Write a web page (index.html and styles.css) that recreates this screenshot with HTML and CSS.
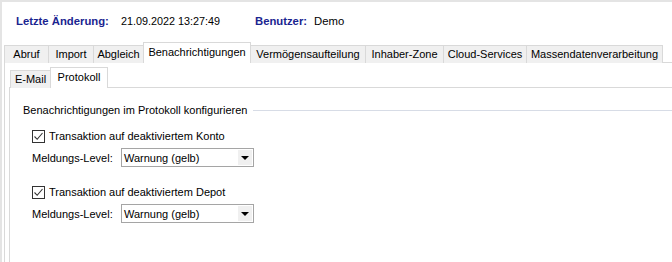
FILE: index.html
```html
<!DOCTYPE html>
<html lang="de">
<head>
<meta charset="UTF-8">
<title>Benachrichtigungen</title>
<link rel="stylesheet" href="styles.css">
</head>
<body>
<div class="window">
    <div class="header">
        <span class="label">Letzte Änderung:</span>
        <span class="value date">21.09.2022 13:27:49</span>
        <span class="label user">Benutzer:</span>
        <span class="value name">Demo</span>
    </div>

    <div class="tabs main">
        <div class="tab">Abruf</div>
        <div class="tab">Import</div>
        <div class="tab">Abgleich</div>
        <div class="tab active">Benachrichtigungen</div>
        <div class="tab">Vermögensaufteilung</div>
        <div class="tab">Inhaber-Zone</div>
        <div class="tab">Cloud-Services</div>
        <div class="tab">Massendatenverarbeitung</div>
    </div>
    <div class="panel">
        <div class="tabs sub">
            <div class="tab">E-Mail</div>
            <div class="tab active">Protokoll</div>
        </div>
        <div class="panel subpanel">
            <div class="group">
                <div class="group-title"><span>Benachrichtigungen im Protokoll konfigurieren</span></div>

                <label class="check">
                    <span class="box"><svg width="11" height="11" viewBox="0 0 11 11"><polyline points="1.5,5.5 4.2,8.3 9.5,2" fill="none" stroke="#333" stroke-width="1.1"/></svg></span>
                    Transaktion auf deaktiviertem Konto
                </label>
                <div class="row">
                    <span class="row-label">Meldungs-Level:</span>
                    <div class="select">
                        <span class="select-text">Warnung (gelb)</span>
                        <span class="select-btn"><span class="arrow"></span></span>
                    </div>
                </div>

                <label class="check second">
                    <span class="box"><svg width="11" height="11" viewBox="0 0 11 11"><polyline points="1.5,5.5 4.2,8.3 9.5,2" fill="none" stroke="#333" stroke-width="1.1"/></svg></span>
                    Transaktion auf deaktiviertem Depot
                </label>
                <div class="row">
                    <span class="row-label">Meldungs-Level:</span>
                    <div class="select">
                        <span class="select-text">Warnung (gelb)</span>
                        <span class="select-btn"><span class="arrow"></span></span>
                    </div>
                </div>
            </div>
        </div>
    </div>
</div>
</body>
</html>
```

FILE: styles.css
```css
html, body {
    margin: 0;
    height: 100%;
    background: #fff;
}
body {
    font-family: "Liberation Sans", Arial, sans-serif;
    font-size: 11px;
    color: #000;
    overflow: hidden;
}
.window {
    height: 100%;
    box-sizing: border-box;
    border-top: 2px solid #e4e4e4;
    border-left: 2px solid #e4e4e4;
}
.header {
    display: flex;
    align-items: center;
    height: 38px;
    padding-left: 14px;
    font-size: 11.3px;
}
.header .label {
    color: #1a2490;
    font-weight: bold;
}
.header .date {
    margin-left: 12px;
    font-size: 10.8px;
}
.header .user {
    margin-left: 35px;
}
.header .name {
    margin-left: 7px;
}

.tabs {
    display: flex;
    align-items: flex-end;
    height: 21px;
    margin-top: 2px;
    padding-left: 2px;
    position: relative;
    z-index: 1;
    margin-bottom: -1px;
}
.tab {
    box-sizing: border-box;
    height: 18px;
    line-height: 17px;
    text-align: center;
    background: #f0f0f0;
    border: 1px solid #d9d9d9;
    border-bottom: none;
    border-right: none;
    white-space: nowrap;
}
.tab:last-child {
    border-right: 1px solid #d9d9d9;
}
.tab.active {
    height: 21px;
    line-height: 18px;
    background: #fff;
    border-right: 1px solid #d9d9d9;
    position: relative;
    z-index: 2;
}
.tab.active + .tab {
    border-left: none;
}

/* main tab widths follow the original control */
.main .tab:nth-child(1) { width: 44px; }
.main .tab:nth-child(2) { width: 45px; }
.main .tab:nth-child(3) { width: 50px; }
.main .tab:nth-child(4) { width: 108px; }
.main .tab:nth-child(5) { width: 114px; }
.main .tab:nth-child(6) { width: 78px; }
.main .tab:nth-child(7) { width: 83px; }
.main .tab:nth-child(8) { width: 137px; }

.panel {
    border-top: 1px solid #d9d9d9;
    border-left: 1px solid #d9d9d9;
    margin-left: 2px;
    padding: 4px 0 0 4px;
    height: 200px;
}
.tabs.sub {
    margin-top: 0;
    padding-left: 1px;
}
.sub .tab:nth-child(1) { width: 40px; }
.sub .tab:nth-child(2) { width: 58px; }

.subpanel {
    margin-left: 0;
    padding: 0;
    height: 180px;
}

.group {
    padding: 14px 0 0 13px;
}
.group-title {
    display: flex;
    align-items: center;
    height: 16px;
}
.group-title::after {
    content: "";
    flex: 1;
    height: 1px;
    background: #d7dce6;
    margin-left: 6px;
}
.check {
    display: flex;
    align-items: center;
    margin: 10px 0 0 9px;
    height: 16px;
}
.check.second {
    margin-top: 17px;
}
.box {
    box-sizing: border-box;
    width: 13px;
    height: 13px;
    border: 1px solid #333;
    display: flex;
    align-items: center;
    justify-content: center;
    margin-right: 4px;
}
.row {
    display: flex;
    align-items: center;
    margin: 4px 0 0 9px;
    height: 19px;
}
.row-label {
    width: 89px;
    white-space: nowrap;
}
.select {
    box-sizing: border-box;
    width: 133px;
    height: 19px;
    border: 1px solid #a5a5a5;
    display: flex;
    align-items: center;
    justify-content: space-between;
    padding: 0 1px 0 2px;
}
.select-btn {
    width: 14px;
    height: 15px;
    background: #f0f0f0;
    display: flex;
    align-items: center;
    justify-content: center;
}
.arrow {
    width: 0;
    height: 0;
    border-left: 4px solid transparent;
    border-right: 4px solid transparent;
    border-top: 4px solid #000;
}
```
